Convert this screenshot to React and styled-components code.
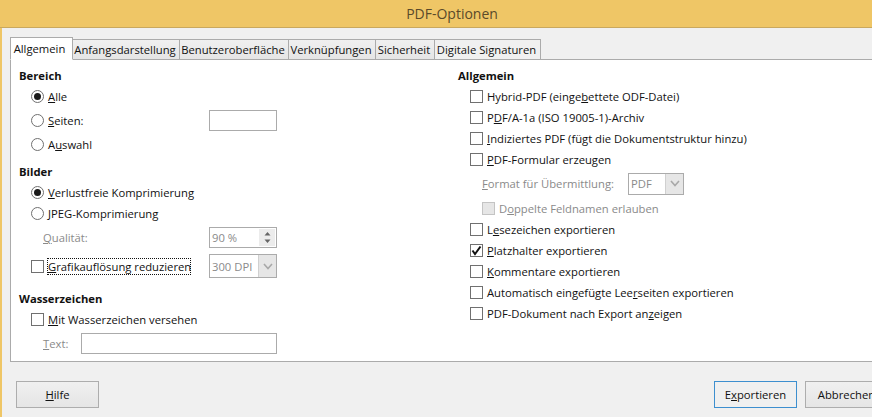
import React from "react";
import styled, { createGlobalStyle } from "styled-components";

const Global = createGlobalStyle`
  html, body { margin: 0; padding: 0; width: 872px; height: 417px; overflow: hidden; background: #f0f0f0; }
  #root { width: 872px; height: 417px; overflow: hidden; }
`;

const Window = styled.div`
  width: 904px; height: 417px; box-sizing: border-box;
  display: flex; flex-direction: column;
  font-family: "Open Sans", "Noto Sans", sans-serif;
  font-size: 11.25px; color: #111;
  background: #f0f0f0;
`;
const TitleBar = styled.header`
  height: 28px; flex: none; box-sizing: border-box;
  display: flex; align-items: center; justify-content: center;
  background: #efc666; border-bottom: 1px solid #c9a85e;
  font-size: 14px; color: #5a4a2a;
`;
const Body = styled.div`
  flex: 1; display: flex; flex-direction: column;
  border-left: 2px solid #efc666;
  padding: 9px 0 0 8px;
`;
const TabBar = styled.div`
  display: flex; align-items: flex-end; height: 23px; margin-bottom: -1px; position: relative; z-index: 1;
`;
const Tab = styled.div`
  box-sizing: border-box; height: ${p => (p.$active ? 23 : 21)}px;
  display: flex; align-items: center; justify-content: center;
  width: ${p => p.$w}px; flex: none;
  padding-right: ${p => (p.$active ? 4 : 2)}px;
  border: 1px solid #ababab;
  border-left-width: ${p => (p.$active ? 1 : 0)}px;
  border-bottom-color: ${p => (p.$active ? "#fff" : "#ababab")};
  background: ${p => (p.$active ? "#fff" : p.$last ? "#f0f0f0" : "linear-gradient(#f0f0f0, #e5e5e5)")};
  white-space: nowrap;
`;
const Panel = styled.main`
  height: 303px; flex: none; box-sizing: border-box;
  background: #fff; border: 1px solid #ababab;
  display: flex; padding-top: 5px;
`;
const LeftCol = styled.section`
  width: 447px; flex: none; box-sizing: border-box; padding-left: 8px;
`;
const RightCol = styled.section`
  flex: 1;
`;
const Heading = styled.div`
  font-weight: 700; height: 21px; display: flex; align-items: center;
  margin-top: ${p => p.$mt || 0}px;
`;
const Row = styled.div`
  display: flex; align-items: center; height: ${p => p.$h || 21}px;
  margin-top: ${p => p.$mt || 0}px;
  padding-left: ${p => p.$indent ?? 12}px;
  color: ${p => (p.$dim ? "#8a8a8a" : "inherit")};
  white-space: nowrap;
`;
const Radio = styled.span`
  width: 13px; height: 13px; border-radius: 50%; flex: none; box-sizing: border-box;
  border: 1px solid #707070; background: #fff; margin-right: 4px;
  display: flex; align-items: center; justify-content: center;
  &::after { content: ""; width: 7px; height: 7px; border-radius: 50%; background: ${p => (p.$on ? "#1a1a1a" : "transparent")}; }
`;
const Check = styled.span`
  width: 13px; height: 13px; flex: none; box-sizing: border-box; margin-right: 4px;
  border: 1px solid ${p => (p.$off ? "#c4c4c4" : "#707070")};
  background: ${p => (p.$off ? "#e6e6e6" : "#fff")};
  display: flex; align-items: center; justify-content: center;
`;
const Label = styled.span`
  flex: none;
  ${p => p.$w && `width: ${p.$w}px;`}
  u { text-underline-offset: 1px; }
`;
const FocusLabel = styled.span`
  flex: none; box-sizing: border-box; width: 144px; height: 17px; margin: 0 18px 0 -1px; padding-left: 1px;
  display: flex; align-items: center;
  outline: 1px dotted #111; outline-offset: -1px;
  u { text-underline-offset: 1px; }
`;
const Field = styled.div`
  box-sizing: border-box; height: ${p => p.$h || 21}px; width: ${p => p.$w}px; flex: none;
  border: 1px solid #ababab; background: #fff;
  display: flex; align-items: center; color: #8a8a8a; padding-left: 2px;
`;
const Value = styled.span` flex: 1; `;
const SpinBox = styled.div`
  width: 16px; height: 17px; margin-right: 1px; background: #ececec;
  display: flex; align-items: center; justify-content: center;
`;
const DropBox = styled.div`
  width: 17px; height: 100%; background: #e6e6e6;
  border-left: 1px solid #d0d0d0;
  display: flex; align-items: center; justify-content: center;
`;
const Footer = styled.footer`
  display: flex; align-items: center; padding: 19px 0 0 6px; gap: 8px;
`;
const Spacer = styled.div` width: 599px; flex: none; `;
const Button = styled.button`
  box-sizing: border-box; height: 27px; width: 83px; flex: none;
  font: inherit; color: inherit; padding: 0;
  border: 1px solid ${p => (p.$default ? "#3d8fcf" : "#adadad")};
  background: ${p => (p.$default ? "#f0f0f0" : "linear-gradient(#f0f0f0, #e5e5e5)")};
`;

const tabs = [
  ["Allgemein", 63], ["Anfangsdarstellung", 107], ["Benutzeroberfläche", 109],
  ["Verknüpfungen", 87], ["Sicherheit", 59], ["Digitale Signaturen", 106],
];

const Tick = () => (
  <svg width="11" height="11" viewBox="0 0 11 11"><path d="M1.5 5.5 L4 9 L9.5 1.5" fill="none" stroke="#111" strokeWidth="2" /></svg>
);
const Spin = () => (
  <svg width="9" height="13" viewBox="0 0 9 13"><path d="M4.5 1 L7.5 4.5 H1.5Z M4.5 12 L7.5 8.5 H1.5Z" fill="#666" /></svg>
);
const Chevron = () => (
  <svg width="10" height="7" viewBox="0 0 10 7"><path d="M1 1 L5 5.5 L9 1" fill="none" stroke="#a8a8a8" strokeWidth="1.6" /></svg>
);

const RightRow = ({ children, checked }) => (
  <Row><Check>{checked && <Tick />}</Check><Label>{children}</Label></Row>
);

export default function App() {
  return (
    <Window>
      <Global />
      <TitleBar>PDF-Optionen</TitleBar>
      <Body>
        <TabBar>
          {tabs.map(([t, w], i) => (
            <Tab key={t} $w={w} $active={i === 0} $last={i === tabs.length - 1}>{t}</Tab>
          ))}
        </TabBar>
        <Panel>
          <LeftCol>
            <Heading>Bereich</Heading>
            <Row $h={21}><Radio $on /><Label><u>A</u>lle</Label></Row>
            <Row $h={27}><Radio /><Label $w={161}><u>S</u>eiten:</Label><Field $w={68} /></Row>
            <Row $h={20}><Radio /><Label>A<u>u</u>swahl</Label></Row>
            <Heading $mt={7}>Bilder</Heading>
            <Row $h={21}><Radio $on /><Label><u>V</u>erlustfreie Komprimierung</Label></Row>
            <Row $h={21}><Radio /><Label><u>J</u>PEG-Komprimierung</Label></Row>
            <Row $h={21} $mt={3} $indent={24} $dim>
              <Label $w={166}><u>Q</u>ualität:</Label>
              <Field $w={68}><Value>90 %</Value><SpinBox><Spin /></SpinBox></Field>
            </Row>
            <Row $h={24} $mt={6}>
              <Check /><FocusLabel><span><u>G</u>rafikauflösung reduzieren</span></FocusLabel>
              <Field $w={68} $h={24}><Value>300 DPI</Value><DropBox><Chevron /></DropBox></Field>
            </Row>
            <Heading $mt={10}>Wasserzeichen</Heading>
            <Row><Check /><Label><u>M</u>it Wasserzeichen versehen</Label></Row>
            <Row $h={21} $mt={3} $indent={24} $dim><Label $w={38}><u>T</u>ext:</Label><Field $w={196} /></Row>
          </LeftCol>
          <RightCol>
            <Heading>Allgemein</Heading>
            <RightRow>Hybrid-PDF (einge<u>b</u>ettete ODF-Datei)</RightRow>
            <RightRow>P<u>D</u>F/A-1a (ISO 19005-1)-Archiv</RightRow>
            <RightRow><u>I</u>ndiziertes PDF (fügt die Dokumentstruktur hinzu)</RightRow>
            <RightRow><u>P</u>DF-Formular erzeugen</RightRow>
            <Row $h={27} $indent={24} $dim>
              <Label $w={146}><u>F</u>ormat für Übermittlung:</Label>
              <Field $w={56} $h={22}><Value>PDF</Value><DropBox><Chevron /></DropBox></Field>
            </Row>
            <Row $h={22} $indent={24} $dim><Check $off /><Label>D<u>o</u>ppelte Feldnamen erlauben</Label></Row>
            <RightRow>L<u>e</u>sezeichen exportieren</RightRow>
            <RightRow checked><u>P</u>latzhalter exportieren</RightRow>
            <RightRow><u>K</u>ommentare exportieren</RightRow>
            <RightRow>Automatisch eingefügte Lee<u>r</u>seiten exportieren</RightRow>
            <RightRow>PDF-Dokument nach Export an<u>z</u>eigen</RightRow>
          </RightCol>
        </Panel>
        <Footer>
          <Button><u>H</u>ilfe</Button>
          <Spacer />
          <Button $default>E<u>x</u>portieren</Button>
          <Button>Abbrechen</Button>
        </Footer>
      </Body>
    </Window>
  );
}
